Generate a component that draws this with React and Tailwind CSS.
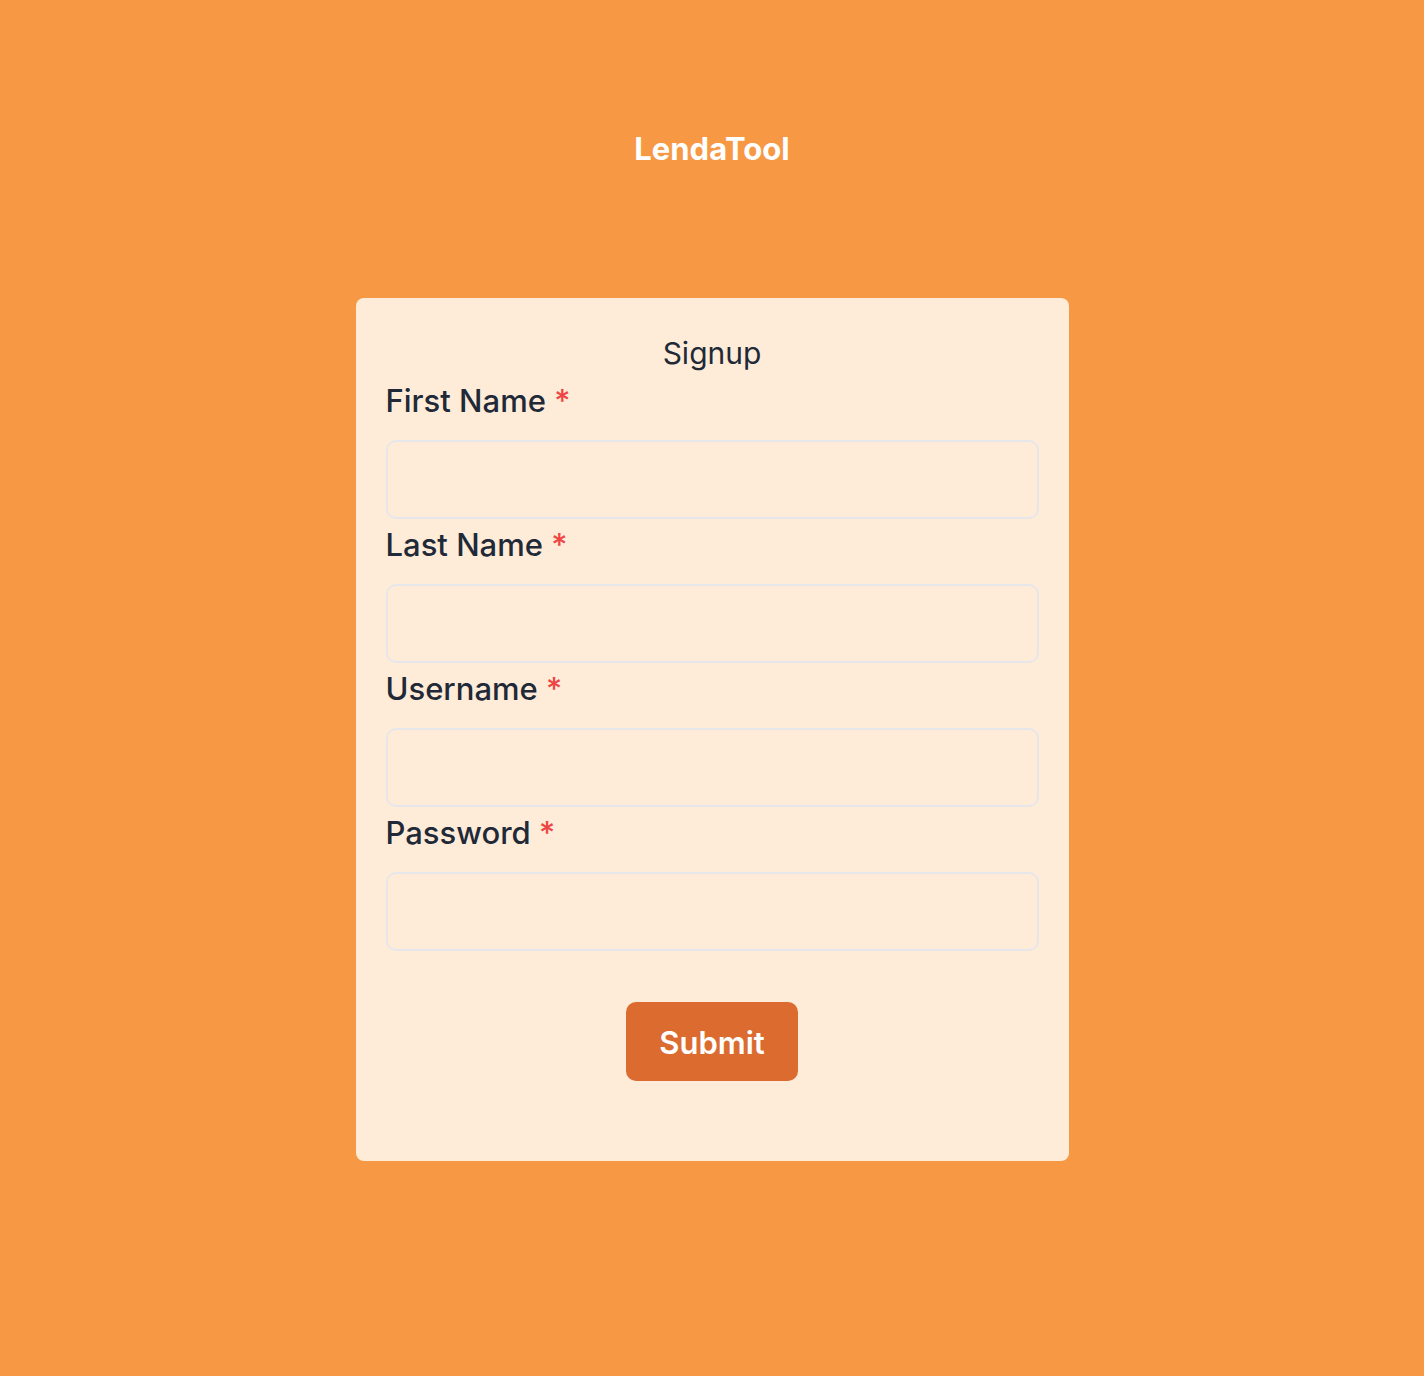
export default function App() {
  const fields = ["First Name", "Last Name", "Username", "Password"];

  return (
    <div className="min-h-[1376px] bg-[#f79844] font-['Inter',sans-serif] flex flex-col items-center">
      {/* Header */}
      <h1 className="mt-[131px] h-[36px] leading-[36px] text-[31px] font-bold text-white">LendaTool</h1>

      {/* Signup card */}
      <div className="mt-[131px] w-[713px] bg-[#feecd8] rounded-lg px-[30px] pt-[37px] pb-[80px]">
        <h2 className="text-center text-[30px] leading-[36px] text-[#1f2937] mb-[12px]">Signup</h2>

        {fields.map((f) => (
          <div key={f} className="mb-[8px]">
            <label className="block h-[36px] leading-[36px] text-[31px] font-medium text-[#1f2937] mb-[21px]">
              {f} <span className="text-[#ef4444]">*</span>
            </label>
            <input
              type={f === "Password" ? "password" : "text"}
              className="block w-full h-[79px] bg-transparent border-2 border-[#e5e7eb] rounded-[10px] outline-none"
            />
          </div>
        ))}

        <div className="flex justify-center mt-[51px]">
          <button className="w-[172px] h-[79px] pt-[4px] bg-[#dc6b2f] rounded-[10px] text-white text-[31px] font-semibold">
            Submit
          </button>
        </div>
      </div>
    </div>
  );
}
